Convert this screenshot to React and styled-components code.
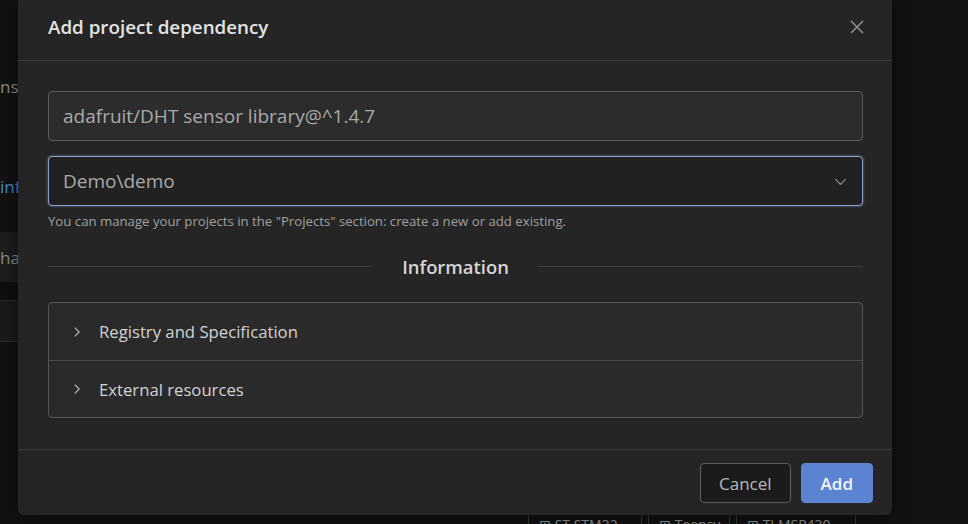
import React from 'react';
import styled, { createGlobalStyle } from 'styled-components';

const Global = createGlobalStyle`
  html, body { margin: 0; padding: 0; background: #121212; }
  body { font-family: "Open Sans", "Noto Sans", sans-serif; overflow: hidden; }
  * { box-sizing: border-box; }
`;

const Page = styled.div`
  position: relative;
  width: 968px;
  height: 524px;
  background: #121212;
  overflow: hidden;
`;

const Behind = styled.div`
  display: flex;
  flex-direction: column;
  height: 100%;
  padding-top: 72px;
  color: #8a8a8a;
  font-size: 17px;
`;

const BgLine = styled.div`
  height: ${p => p.h}px;
  display: flex;
  align-items: center;
  width: 60px;
  overflow: hidden;
  white-space: nowrap;
  color: ${p => p.link ? '#4a86c8' : '#8a8a8a'};
  background: ${p => p.bg || 'transparent'};
  border-top: ${p => p.bordered ? '1px solid #2a2a2a' : 'none'};
  border-bottom: ${p => p.bordered ? '1px solid #2a2a2a' : 'none'};
`;

const Spacer = styled.div`
  flex: 1;
`;

const Tabs = styled.div`
  display: flex;
  gap: 6px;
  padding-left: 528px;
  height: 11px;
`;

const Tab = styled.div`
  width: ${p => p.w}px;
  border: 1px solid #3a3a3a;
  border-bottom: none;
  color: #9a9a9a;
  font-size: 14px;
  padding: 0 0 0 10px;
  line-height: 22px;
  overflow: hidden;
  white-space: nowrap;
`;

const Modal = styled.div`
  position: absolute;
  left: 18px;
  top: -6px;
  width: 874px;
  height: 521px;
  background: #252525;
  border-radius: 6px;
  display: flex;
  flex-direction: column;
  box-shadow: 0 4px 18px rgba(0,0,0,0.5);
`;

const Header = styled.div`
  height: 67px;
  display: flex;
  align-items: center;
  justify-content: space-between;
  padding: 0 24px 0 30px;
  border-bottom: 1px solid #3a3a3a;
`;

const Title = styled.h2`
  margin: 0;
  font-size: 18.8px;
  font-weight: 600;
  color: #e3e3e3;
`;

const CloseBtn = styled.button`
  background: none;
  border: none;
  padding: 0;
  width: 22px;
  height: 22px;
  display: flex;
  align-items: center;
  justify-content: center;
  color: #9a9a9a;
  cursor: pointer;
`;

const Body = styled.div`
  flex: 1;
  padding: 30px 29px 0 30px;
  display: flex;
  flex-direction: column;
`;

const Field = styled.div`
  height: 50px;
  border-radius: 4px;
  border: 1px solid ${p => p.focused ? '#8aa3d4' : '#595959'};
  background: ${p => p.focused ? '#212121' : '#2c2c2c'};
  box-shadow: ${p => p.focused ? '0 0 3px rgba(138,163,212,0.6)' : 'none'};
  display: flex;
  align-items: center;
  justify-content: space-between;
  padding: 0 14px 0 14px;
  color: #a9a9a9;
  font-size: 19px;
  margin-top: ${p => p.mt || 0}px;
`;

const Hint = styled.div`
  margin-top: 6px;
  font-size: 13.2px;
  color: #a0a0a0;
`;

const Divider = styled.div`
  margin-top: 24px;
  display: flex;
  align-items: center;
  gap: 30px;
  &::before, &::after {
    content: '';
    flex: 1;
    height: 1px;
    background: #3d3d3d;
  }
`;

const DividerLabel = styled.span`
  font-size: 18.4px;
  font-weight: 600;
  color: #d6d6d6;
`;

const Accordion = styled.div`
  margin-top: 23px;
  border: 1px solid #545454;
  border-radius: 4px;
  background: #2a2a2a;
  overflow: hidden;
`;

const Item = styled.div`
  height: 57px;
  display: flex;
  align-items: center;
  gap: 15px;
  padding-left: 21px;
  color: #d2d2d2;
  font-size: 16.7px;
  & + & { border-top: 1px solid #4a4a4a; }
`;

const Footer = styled.div`
  height: 66px;
  border-top: 1px solid #3a3a3a;
  display: flex;
  align-items: flex-start;
  justify-content: flex-end;
  gap: 10px;
  padding: 13px 19px 0 0;
`;

const Button = styled.button`
  height: 40px;
  padding: 0 ${p => p.primary ? 19 : 18}px;
  border-radius: 4px;
  font-family: inherit;
  font-size: 17px;
  cursor: pointer;
  border: 1px solid ${p => p.primary ? '#5b83d2' : '#5e5e5e'};
  background: ${p => p.primary ? '#5b83d2' : '#1b1b1b'};
  color: ${p => p.primary ? '#f2f5fb' : '#b8b8b8'};
  font-weight: ${p => p.primary ? 600 : 400};
`;

const Chevron = ({ dir = 'right', size = 14, color = '#bdbdbd' }) => (
  <svg width={size} height={size} viewBox="0 0 16 16" fill="none" stroke={color} strokeWidth="1.3">
    {dir === 'right' ? <path d="M5.5 3 L10.5 8 L5.5 13" /> : <path d="M2.5 5.5 L8 11 L13.5 5.5" />}
  </svg>
);

export default function App() {
  return (
    <Page>
      <Global />
      <Behind>
        <BgLine h={28}>nsor</BgLine>
        <BgLine h={72} />
        <BgLine h={28} link>info</BgLine>
        <BgLine h={32} />
        <BgLine h={50} bg="#1d1d1d">hang</BgLine>
        <BgLine h={18} bg="#0f0f0f" />
        <BgLine h={42} bg="#1a1a1a" bordered />
        <Spacer />
        <Tabs>
          <Tab w={114}>⊞ ST STM32</Tab>
          <Tab w={82}>⊞ Teensy</Tab>
          <Tab w={120}>⊞ TI MSP430</Tab>
        </Tabs>
      </Behind>
      <Modal>
        <Header>
          <Title>Add project dependency</Title>
          <CloseBtn aria-label="Close">
            <svg width="16" height="16" viewBox="0 0 16 16" stroke="#9a9a9a" strokeWidth="1.4">
              <path d="M2 2 L14 14 M14 2 L2 14" />
            </svg>
          </CloseBtn>
        </Header>
        <Body>
          <Field>adafruit/DHT sensor library@^1.4.7</Field>
          <Field focused mt={15}>
            Demo\demo
            <Chevron dir="down" size={15} color="#8c8c8c" />
          </Field>
          <Hint>You can manage your projects in the "Projects" section: create a new or add existing.</Hint>
          <Divider><DividerLabel>Information</DividerLabel></Divider>
          <Accordion>
            <Item><Chevron />Registry and Specification</Item>
            <Item><Chevron />External resources</Item>
          </Accordion>
        </Body>
        <Footer>
          <Button>Cancel</Button>
          <Button primary>Add</Button>
        </Footer>
      </Modal>
    </Page>
  );
}
